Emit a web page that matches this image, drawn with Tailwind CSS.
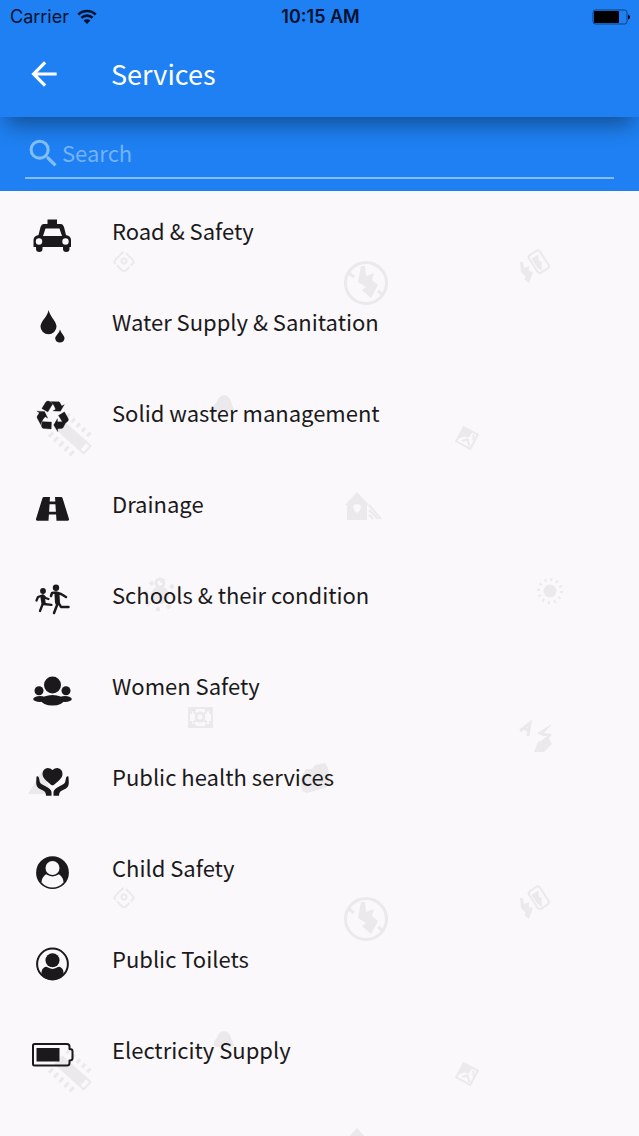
<!DOCTYPE html>
<html lang="en">
<head>
    <meta charset="UTF-8">
    <meta name="viewport" content="width=device-width, initial-scale=1.0">
    <title>Services</title>
    <script src="https://cdn.jsdelivr.net/npm/@tailwindcss/browser@4"></script>
</head>
<body class="min-h-screen flex flex-col bg-[#faf8fa] text-[#1b191c] font-['Noto_Sans_CJK_SC',sans-serif]">
    <header class="relative z-10 bg-[#1e80f2] shadow-[0_14px_20px_-6px_rgba(0,0,0,0.38)]">
        <!-- status bar -->
        <div class="grid grid-cols-3 items-center h-[33px] pl-[10px] pr-2 text-lg text-[#03102e] font-['Inter',sans-serif]">
            <div class="flex items-center gap-2">
                <span>Carrier</span>
                <svg class="w-5 h-4" viewBox="0 0 20 16" fill="none" stroke="currentColor" stroke-width="2.6">
                    <path d="M1.3 5.6a12.4 12.4 0 0 1 17.4 0M4.4 8.9a8 8 0 0 1 11.2 0"/>
                    <path d="M10 15l-3.4-3.4a4.8 4.8 0 0 1 6.8 0z" fill="currentColor" stroke="none"/>
                </svg>
            </div>
            <span class="text-center font-semibold">10:15 AM</span>
            <svg class="justify-self-end w-[39px] h-4" viewBox="0 0 39 16">
                <rect x="1" y="1" width="34" height="14" rx="2.5" fill="none" stroke="#0b3f80"/>
                <rect x="2" y="2" width="25" height="12" rx="1" fill="#000"/>
                <path d="M36 5.5q2 .5 2 2.5t-2 2.5z" fill="#000"/>
            </svg>
        </div>
        <div class="flex items-center h-[84px] pl-[25px] pb-0.5 text-white">
            <button type="button" aria-label="Back" class="w-[86px]">
                <svg class="size-[38px]" viewBox="0 0 24 24" fill="currentColor"><path d="M20 11H7.83l5.59-5.59L12 4l-8 8 8 8 1.41-1.41L7.83 13H20v-2z"/></svg>
            </button>
            <h1 class="text-[27px] leading-10">Services</h1>
        </div>
    </header>

    <div class="h-[74px] px-[25px] pt-[18px] bg-[#1e80f2]">
        <label class="flex items-start h-11 border-b-2 border-[#82bff8] text-[#82bff8]">
            <svg class="size-[37px] shrink-0" viewBox="0 0 24 24" fill="currentColor"><path d="M15.5 14h-.79l-.28-.27A6.471 6.471 0 0 0 16 9.5 6.5 6.5 0 1 0 9.5 16c1.61 0 3.09-.59 4.23-1.57l.27.28v.79l5 4.99L20.49 19l-4.99-5zm-6 0C7.01 14 5 11.99 5 9.5S7.01 5 9.5 5 14 7.01 14 9.5 11.99 14 9.5 14z"/></svg>
            <input type="text" placeholder="Search" aria-label="Search" class="w-full h-[34px] text-[22px] text-white placeholder:text-[#74b3f8] outline-none">
        </label>
    </div>

    <main class="relative flex-1 overflow-hidden">
        <!-- watermark pattern -->
        <svg class="absolute inset-0 w-full h-full" fill="#ebe9eb" stroke="#ebe9eb" stroke-width="0" aria-hidden="true">
            <defs>
                <g id="tile">
                    <g transform="translate(124 70) rotate(45)" fill="none" stroke-width="2">
                        <rect x="-7" y="-7" width="15" height="15" rx="3" stroke-dasharray="16 2"/>
                        <circle r="2.5"/>
                    </g>
                    <g transform="translate(366 92)">
                        <circle r="20.5" fill="none" stroke-width="3"/>
                        <path d="M-5-17h4l1 10 8-3-2 7 6 5-7 13-9-8 4-3-8-5z"/>
                        <path d="M-17-10l5 4M12 8l5 4" stroke-width="3"/>
                    </g>
                    <g transform="translate(535 75)">
                        <path d="M-15-4h3l1 6 5-2v5l4 1-4 11-5-4 2-2-5-5z"/>
                        <g transform="rotate(-33)">
                            <rect x="-1" y="-12" width="13" height="21" rx="3" fill="none" stroke-width="2"/>
                            <path d="M1-8h8l-3 6 2 2-5 8-2-6z"/>
                        </g>
                    </g>
                    <path d="M214 219q-1-5 3-8 1-6 7-7 6 1 7 7l3 8q-7 4-10-1-5 4-10 1z"/>
                    <g transform="translate(73 246) rotate(42)">
                        <path d="M-20-6h34v12h-34z"/>
                        <rect x="10" y="-5" width="9" height="10" fill="none" stroke-width="2"/>
                        <path d="M-18-15v5M-11-15v5M-4-15v5M3-15v5M10-15v5M-18 10v6M-11 10v6M-4 10v6M3 10v6M10 10v6" stroke-width="3"/>
                    </g>
                    <g transform="translate(467 247) rotate(28)">
                        <rect x="-8" y="-8" width="16" height="16" fill="none" stroke-width="2"/>
                        <path d="M-8-8h10l-1 7-4 1-5 5z"/>
                        <path d="M-3 5l4-4 5 5M4-6l3 5" fill="none" stroke-width="2"/>
                    </g>
                    <path fill-rule="evenodd" d="M345 314l12-13 12 13h-2v15h-20v-15zM353 315q0 5 4 7 4-2 4-7-4-4-8 0z"/>
                    <path d="M369 314l12 14M369 319l9 9M369 324l4 4" stroke-width="2"/>
                    <g transform="translate(550 400)">
                        <circle r="6.5"/>
                        <circle r="11.5" fill="none" stroke-width="3" stroke-dasharray="2 4.02"/>
                    </g>
                    <g transform="translate(160 404)">
                        <circle cy="-12" r="4" fill="none" stroke-width="3"/>
                        <circle r="9"/>
                        <circle r="14.5" fill="none" stroke-width="4" stroke-dasharray="4 7.38"/>
                    </g>
                    <g transform="translate(200 526)" fill="none" stroke-width="2">
                        <rect x="-11" y="-9" width="23" height="19"/>
                        <circle r="4" stroke-width="3"/>
                        <path d="M-9-3v-4h5M10-3v-4H5M-9 4v4h5M10 4v4H5M-7-6l3 3M7-6L4-3M-7 6l3-3M7 6L4 3"/>
                    </g>
                    <g transform="translate(536 545)">
                        <path d="M-16-5L-6-13l-2 13M-12-8l5 3" fill="none" stroke-width="3"/>
                        <path d="M16-12L1-3l6 3h4l-6 5-3 1-4 10h10l8-8-3-5 3-5-8-1z"/>
                    </g>
                    <path d="M303 583l3-5 6 0 3-4 10-2 3 5 2 16-5 4-18 5-5-2-2-12z"/>
                    <path d="M28 603l14-23 10 23z"/>
                </g>
            </defs>
            <use href="#tile"/>
            <use href="#tile" y="636"/>
        </svg>

        <ul id="services" class="relative text-[22px] leading-9"></ul>
    </main>

    <script>
        const services = [
            {
                name: 'Road & Safety',
                icon: `<path fill-rule="evenodd" d="M19.5 7.5h9.5V12h4q2 0 3 3l2 8q5 1 5 5v7h-1.500v2q0 3-3.200 3t-3.300-3v-2H14.500v2q0 3-3.200 3T8 37v-2H5.500v-7q0-4 5-5l2-8q1-3 3-3h4zM17.500 16.500l-2.500 7.500h19l-2.500-7.500z"/>
                    <circle cx="11" cy="29.5" r="3.2" fill="#faf8fa"/><circle cx="37.5" cy="29.5" r="3.2" fill="#faf8fa"/>`
            },
            {
                name: 'Water Supply & Sanitation',
                icon: `<path d="M20.5 7q1 4 5 9.500 3 4.500 3 7a8 7.700 0 0 1-16 0q0-3 3.500-7.500 4-5 4.500-9zM32 26.500q.5 2 2.800 5 1.700 2.200 1.700 4a4.700 4.700 0 0 1-9.300 0q0-1.800 2-4 2.300-2.500 2.800-5z"/>`
            },
            {
                name: 'Solid waster management',
                icon: `<path transform="translate(8.5 7) scale(.018)" stroke="currentColor" stroke-width="14" d="M836 1169l-15 368-2 22-420-29q-36-3-67-31.500t-47-65.500q-11-27-14.500-55t4-65 12-55 21.500-64 19-53q78 12 509 28zM449 583l180 379-147-92q-63 72-111.500 144.500t-72.500 125-39.500 94.500-18.500 63l-4 21-190-357q-17-26-18-56t6-47l8-18q35-63 114-188l-140-86zM1680 1100l-188 359q-12 29-36.500 46.500t-43.500 20.500l-18 4q-71 7-219 12l8 164-230-367 211-362 7 173q170 16 283 5t170-33zM895 176q-47 63-265 435l-317-187-19-12 225-356q20-31 60-45t80-10q24 2 48.500 12t42 21 41.500 33 36 34.500 36 39.500 32 35zM1550 603l212 363q18 37 12.500 76t-27.500 74q-13 20-33 37t-38 28-48.500 22-47 16-51.500 14-46 12q-34-72-265-436l313-195zM1407 279l142-83-220 373-419-20 151-86q-34-89-75-166t-75.500-123.500-64.500-80-47-46.500l-17-13 405 1q31-3 58 10.500t39 28.500l11 15q39 61 112 190z"/>`
            },
            {
                name: 'Drainage',
                icon: `<path d="M16 12h6l-.3 4.500h5.600L27 12h6q1.200 0 1.600 1.200L41 34q.4 1.700-1.200 1.700H28.500l-.4-6.200h-7.200l-.4 6.200H9.200Q7.600 35.700 8 34l6.400-20.800Q14.800 12 16 12zM21.600 19.300l-.5 7.400h6.800l-.5-7.400z" fill-rule="evenodd"/>`
            },
            {
                name: 'Schools & their condition',
                icon: `<g transform="translate(0 -4)">
                        <circle cx="15" cy="19" r="2.9"/><circle cx="28" cy="15.8" r="3.2"/>
                        <g fill="none" stroke="currentColor" stroke-linecap="round" stroke-linejoin="round">
                            <path stroke-width="2.3" d="M8.500 28.500l1.500-3.500 5-1.700 2.500 2.700 3 1M14.500 32.500l-2.500 6.500M16 32l7.500.8"/>
                            <path stroke-width="4.4" d="M14.700 25.500l.8 5.500"/>
                            <path stroke-width="2.5" d="M23 24l1-3 4-.5 5 1.500 5 3M29.500 32l-3.500 9M31 31.500l2 3.500h7.500"/>
                            <path stroke-width="5" d="M29 22.500l.5 8"/>
                        </g>
                    </g>`
            },
            {
                name: 'Women Safety',
                icon: `<circle cx="24.5" cy="18" r="8.5"/><circle cx="11" cy="23.7" r="4.5"/><circle cx="38" cy="23.7" r="4.5"/>
                    <ellipse cx="12" cy="32" rx="6.8" ry="3"/><ellipse cx="37" cy="32" rx="6.8" ry="3"/><ellipse cx="24.5" cy="33.2" rx="11.4" ry="5.2"/>`
            },
            {
                name: 'Public health services',
                icon: `<path d="M24.5 12q2-2 5-2 5 1 5 6 0 3-3.500 6.500L26 26.700q-1.500 1-3 0L18 22.500Q14.500 19 14.500 16q0-5 5-6 3 0 5 2z"/>
                    <path id="hand" d="M8.500 18.500q2-.8 2.500 1.500l.8 4q.5 1.500 2 2.300l5.500 3q4.200 2.200 4.200 5.200v3.200h-5.500q0-4-3-5.200l-4-2Q8 28.500 8.200 24z"/>
                    <use href="#hand" transform="matrix(-1 0 0 1 49 0)"/>`
            },
            {
                name: 'Child Safety',
                icon: `<circle cx="24.5" cy="23.7" r="16.4"/>
                    <g fill="#faf8fa"><circle cx="24.5" cy="19" r="7"/><path d="M13.500 33.500q0-5 4.500-8.200 6.500 4.200 13 0 4.500 3.200 4.500 8.200-4.500 5-11 5t-11-5z"/></g>`
            },
            {
                name: 'Public Toilets',
                icon: `<circle cx="24.5" cy="24" r="15.4" fill="none" stroke="currentColor" stroke-width="2"/>
                    <circle cx="24.5" cy="20.3" r="7"/><path d="M13.500 35v-2q0-5 4-6.300 1 0 1.500.4 5.500 3.600 11 0 .5-.4 1.500-.4 4 1.300 4 6.300v2q-4 5-11 5t-11-5z"/>`
            },
            {
                name: 'Electricity Supply',
                icon: `<path fill="none" stroke="currentColor" stroke-width="2" stroke-linejoin="round" d="M6.500 13H39q2.500 0 2.500 2.500v2.500q3 0 3 2v7.500q0 2-3 2V32q0 2.500-2.500 2.500H6.500q-1.500 0-1.500-1.500V14.500Q5 13 6.500 13z"/>
                    <path d="M8.500 17h23v13.500h-23z"/>`
            }
        ]
        const list = document.querySelector('#services')
        services.forEach(item => {
            const row = document.createElement('li')
            row.innerHTML = `<a href="#" class="flex items-start h-[91px] pt-[21px] pl-7">
                <svg class="size-12 mr-9 shrink-0" viewBox="0 0 48 48" fill="currentColor">${item.icon}</svg>
                <span></span>
            </a>`
            row.querySelector('span').textContent = item.name
            list.appendChild(row)
        })
    </script>
</body>
</html>
